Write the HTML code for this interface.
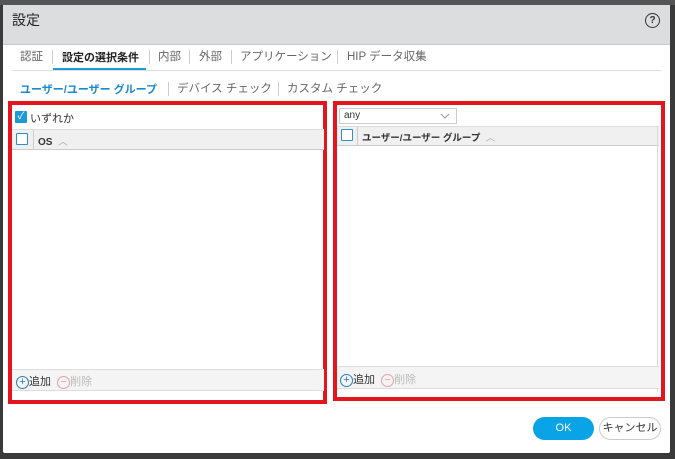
<!DOCTYPE html><html><head><meta charset="utf-8"><style>
body{margin:0;width:675px;height:459px;background:#3a3a3a;position:relative;overflow:hidden;font-family:"Liberation Sans","Noto Sans CJK JP",sans-serif;font-size:12px;color:#333}
.a{position:absolute;white-space:nowrap}
.dlg{left:3px;top:5px;width:667px;height:448px;background:#fff;border-radius:2px}
.hdr{left:3px;top:5px;width:667px;height:39px;background:#dcdddf;border-bottom:1px solid #c8c8c8}
.red{border:4px solid #e3151f;box-sizing:border-box}
.th{background:#f0f0f0;border-top:1px solid #ddd;border-bottom:1px solid #ccc;box-sizing:border-box}
.cb{width:10px;height:10px;border:1.5px solid #2b8fd0;border-radius:1px;background:#fff}
.ft{background:#f4f4f4;border-top:1px solid #ddd;border-bottom:1px solid #ddd;box-sizing:border-box}
.t{font-size:11.5px;color:#666;top:48px}
.s{font-size:11.5px;color:#666;top:80px}
.bar{width:1px;height:14px;background:#ccc}
</style></head><body>
<div class="a" style="left:0;top:0;width:675px;height:5px;background:#555"></div>
<div class="a dlg"></div>
<div class="a hdr"></div>
<div class="a" style="left:12px;top:10px;font-size:14px;color:#222">設定</div>
<div class="a" style="left:645px;top:13px;width:13px;height:13px;border:1.5px solid #333;border-radius:50%;font-size:10px;font-weight:bold;text-align:center;line-height:13px">?</div>
<div class="a t" style="left:20px">認証</div>
<div class="a bar" style="left:52px;top:50px"></div>
<div class="a t" style="left:62px;color:#222;font-weight:bold;font-size:11px;top:49px">設定の選択条件</div>
<div class="a bar" style="left:149px;top:50px"></div>
<div class="a t" style="left:158px">内部</div>
<div class="a bar" style="left:189px;top:50px"></div>
<div class="a t" style="left:199px">外部</div>
<div class="a bar" style="left:231px;top:50px"></div>
<div class="a t" style="left:240px">アプリケーション</div>
<div class="a bar" style="left:337px;top:50px"></div>
<div class="a t" style="left:347px">HIP データ収集</div>
<div class="a" style="left:12px;top:70px;width:649px;height:1px;background:#ddd"></div>
<div class="a" style="left:53px;top:68px;width:93px;height:2px;background:#1a9ad6"></div>
<div class="a s" style="left:20px;color:#1a8ad0;font-weight:bold;font-size:11px;top:81px">ユーザー/ユーザー グループ</div>
<div class="a bar" style="left:168px;top:82px"></div>
<div class="a s" style="left:177px">デバイス チェック</div>
<div class="a bar" style="left:278px;top:82px"></div>
<div class="a s" style="left:287px">カスタム チェック</div>

<div class="a red" style="left:8px;top:101px;width:319px;height:303px"></div>
<div class="a" style="left:15px;top:111px;width:12px;height:12px;background:#1a9ad6;border-radius:1px;color:#fff;font-size:10px;line-height:12px;text-align:center">✓</div>
<div class="a" style="left:30px;top:110px;font-size:11px">いずれか</div>
<div class="a th" style="left:12px;top:129px;width:312px;height:21px"></div>
<div class="a cb" style="left:16px;top:133px"></div>
<div class="a" style="left:33px;top:130px;width:1px;height:19px;background:#ccc"></div>
<div class="a" style="left:38px;top:133px;font-size:10px;font-weight:bold">OS <span style="color:#aaa;font-weight:normal">&nbsp;︿</span></div>
<div class="a ft" style="left:12px;top:369px;width:312px;height:22px"></div>
<div class="a" style="left:16px;top:373px;font-size:11px"><span style="display:inline-block;width:11px;height:11px;border:1px solid #2b7fb8;border-radius:50%;text-align:center;line-height:11px;color:#2b7fb8;font-size:11px;vertical-align:middle">+</span>追加 &nbsp;<span style="color:#bbb"><span style="display:inline-block;width:11px;height:11px;border:1px solid #e8a0a0;border-radius:50%;text-align:center;line-height:10px;color:#e8a0a0;vertical-align:middle">−</span>削除</span></div>

<div class="a red" style="left:333px;top:101px;width:332px;height:300px"></div>
<div class="a" style="left:339px;top:108px;width:118px;height:16px;border:1px solid #ccc;box-sizing:border-box;font-size:10px;padding-left:4px;line-height:14px">any</div>
<svg class="a" style="left:440px;top:113px" width="10" height="6"><path d="M1 1L5 5L9 1" fill="none" stroke="#999" stroke-width="1"/></svg>
<div class="a th" style="left:337px;top:126px;width:322px;height:20px"></div>
<div class="a cb" style="left:341px;top:129px"></div>
<div class="a" style="left:357px;top:127px;width:1px;height:18px;background:#ccc"></div>
<div class="a" style="left:362px;top:130px;font-size:9.5px;font-weight:bold">ユーザー/ユーザー グループ <span style="color:#aaa;font-weight:normal">&nbsp;︿</span></div>
<div class="a" style="left:657px;top:126px;width:1px;height:265px;background:#ddd"></div>
<div class="a ft" style="left:337px;top:366px;width:322px;height:23px"></div>
<div class="a" style="left:340px;top:371px;font-size:11px"><span style="display:inline-block;width:11px;height:11px;border:1px solid #2b7fb8;border-radius:50%;text-align:center;line-height:11px;color:#2b7fb8;vertical-align:middle">+</span>追加 &nbsp;<span style="color:#bbb"><span style="display:inline-block;width:11px;height:11px;border:1px solid #e8a0a0;border-radius:50%;text-align:center;line-height:10px;color:#e8a0a0;vertical-align:middle">−</span>削除</span></div>

<div class="a" style="left:533px;top:417px;width:61px;height:23px;background:#0aa3e6;border-radius:12px;color:#fff;font-size:11px;text-align:center;line-height:22px">OK</div>
<div class="a" style="left:599px;top:417px;width:62px;height:23px;border:1px solid #ccc;box-sizing:border-box;border-radius:12px;font-size:11px;text-align:center;line-height:21px">キャンセル</div>
</body></html>
